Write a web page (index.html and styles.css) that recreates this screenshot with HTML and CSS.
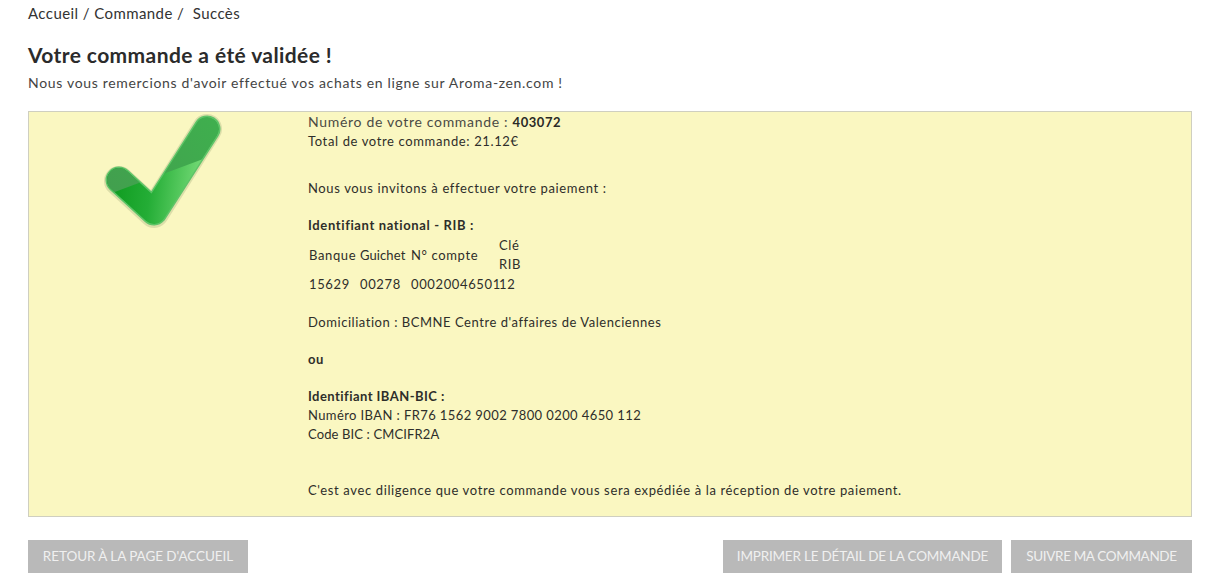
FILE: index.html
```html
<!DOCTYPE html>
<html lang="fr">
<head>
<meta charset="utf-8">
<title>Commande validée</title>
<link rel="stylesheet" href="styles.css">
</head>
<body>
<main class="page">
  <nav class="crumbs">Accueil / Commande /&nbsp; Succès</nav>
  <h1 class="title">Votre commande a été validée !</h1>
  <p class="subtitle">Nous vous remercions d'avoir effectué vos achats en ligne sur Aroma-zen.com !</p>
  <section class="panel">
    <div class="mark">
      <svg class="check" width="130" height="125" viewBox="100 108 130 125" aria-hidden="true">
        <defs>
          <linearGradient id="vivid" gradientUnits="userSpaceOnUse" x1="112" y1="190" x2="205" y2="200">
            <stop offset="0" stop-color="#0f9c20"/>
            <stop offset="0.4" stop-color="#24ad36"/>
            <stop offset="1" stop-color="#7fe07f"/>
          </linearGradient>
          <linearGradient id="muted" gradientUnits="userSpaceOnUse" x1="115" y1="200" x2="215" y2="125">
            <stop offset="0" stop-color="#429f4e"/>
            <stop offset="1" stop-color="#3fae4e"/>
          </linearGradient>
          <clipPath id="upper">
            <polygon points="100,108 230,108 230,148 112,192 100,192"/>
          </clipPath>
        </defs>
        <path d="M119 180 L154 212 L207 128" fill="none" stroke="#8f9f6a" stroke-opacity=".28" stroke-width="30" stroke-linecap="round" stroke-linejoin="round"/>
        <path d="M119 179 L154 211 L207 128" fill="none" stroke="#5ec468" stroke-width="27" stroke-linecap="round" stroke-linejoin="round"/>
        <path d="M119 179 L154 211 L207 128" fill="none" stroke="url(#vivid)" stroke-width="24" stroke-linecap="round" stroke-linejoin="round"/>
        <path d="M119 179 L154 211 L207 128" fill="none" stroke="url(#muted)" stroke-width="24" stroke-linecap="round" stroke-linejoin="round" clip-path="url(#upper)"/>
      </svg>
    </div>
    <div class="details">
      <p class="line order">Numéro de votre commande : <strong class="num">403072</strong></p>
      <p class="line">Total de votre commande: 21.12€</p>
      <p class="line gap-l">Nous vous invitons à effectuer votre paiement :</p>
      <p class="line gap-m"><strong>Identifiant national - RIB :</strong></p>
      <table class="rib">
        <tr><td class="c1">Banque</td><td class="c2">Guichet</td><td class="c3">N° compte</td><td class="c4">Clé RIB</td></tr>
        <tr class="values"><td>15629</td><td>00278</td><td>00020046501</td><td>12</td></tr>
      </table>
      <p class="line gap-m domicile">Domiciliation : BCMNE Centre d'affaires de Valenciennes</p>
      <p class="line gap-m"><strong>ou</strong></p>
      <p class="line gap-m"><strong class="iban-head">Identifiant IBAN-BIC :</strong></p>
      <p class="line iban">Numéro IBAN : FR76 1562 9002 7800 0200 4650 112</p>
      <p class="line bic">Code BIC : CMCIFR2A</p>
      <p class="line gap-xl">C'est avec diligence que votre commande vous sera expédiée à la réception de votre paiement.</p>
    </div>
  </section>
  <div class="actions">
    <a class="btn btn-home">Retour à la page d'accueil</a>
    <div class="actions-right">
      <a class="btn btn-print">Imprimer le détail de la commande</a>
      <a class="btn btn-track">Suivre ma commande</a>
    </div>
  </div>
</main>
</body>
</html>
```
FILE: styles.css
```css
* { box-sizing: border-box; }
html, body { margin: 0; padding: 0; background: #fff; }
body { font-family: "Lato", "Liberation Sans", sans-serif; color: #333; overflow: hidden; }
.page { width: 1220px; height: 580px; padding: 5px 28px 0; }
.crumbs { font-size: 15px; line-height: 17px; letter-spacing: .42px; color: #333; }
.title { margin: 21px 0 0; font-size: 21px; line-height: 24px; font-weight: 700; letter-spacing: .4px; color: #2b2b2b; }
.subtitle { margin: 7px 0 0; font-size: 14px; line-height: 18px; letter-spacing: .68px; color: #444; }
.panel { margin-top: 19px; height: 406px; display: flex; background: #faf7c1; border: 1px solid #cfcfc0; }
.mark { width: 279px; flex: none; padding: 0 0 0 71px; }
.check { display: block; margin-top: -3px; }
.details { flex: 1; font-size: 13px; color: #2e2e2a; letter-spacing: .63px; }
.line { margin: 0; line-height: 19px; }
.order { font-size: 14px; letter-spacing: .69px; color: #4a4a44; }
.num { color: #2a2a26; font-size: 13px; letter-spacing: .55px; }
.domicile { letter-spacing: .54px; }
.iban-head { letter-spacing: .45px; }
.iban { letter-spacing: .4px; }
.bic { letter-spacing: .13px; }
.gap-l { margin-top: 28px; }
.gap-m { margin-top: 18px; }
.gap-xl { margin-top: 37px; }
.rib { border-collapse: collapse; table-layout: fixed; width: 214px; margin: 0 0 0 1px; }
.rib td { padding: 0; line-height: 19px; vertical-align: middle; height: 20px; }
.rib tr:first-child td { height: 40px; }
.rib .values td { line-height: 16px; padding-bottom: 2px; }
.c1 { width: 51px; }
.c2 { width: 51px; letter-spacing: .1px; }
.c3 { width: 88px; }
.c4 { width: 24px; }
.actions { margin-top: 23px; display: flex; justify-content: space-between; }
.actions-right { display: flex; gap: 9px; }
.btn { display: block; height: 33px; background: #b9b9b9; color: #f0f0f0; font-size: 13.5px; line-height: 33px; text-align: center; text-transform: uppercase; white-space: nowrap; }
.btn-home { width: 220px; letter-spacing: -.07px; }
.btn-print { width: 279px; letter-spacing: -.2px; }
.btn-track { width: 181px; letter-spacing: -.35px; }
```
